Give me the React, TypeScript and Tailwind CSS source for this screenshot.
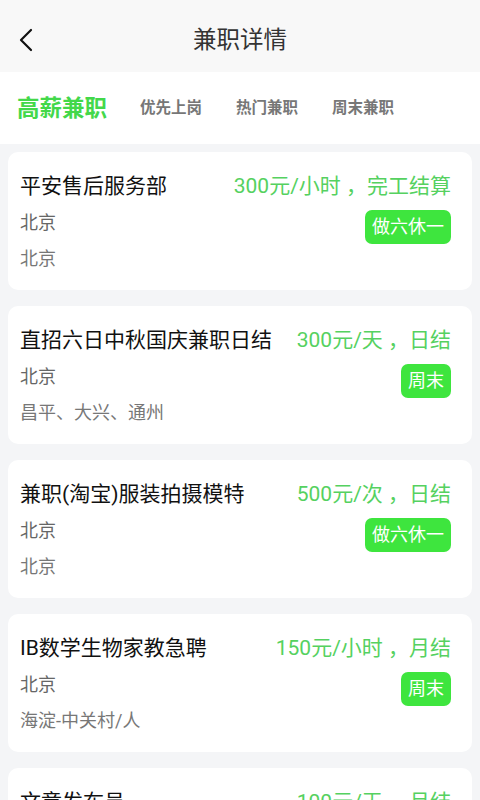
import React from 'react';

const jobs = [
  { title: '平安售后服务部', price: '300元/小时 ，完工结算', city: '北京', area: '北京', tag: '做六休一' },
  { title: '直招六日中秋国庆兼职日结', price: '300元/天 ，日结', city: '北京', area: '昌平、大兴、通州', tag: '周末' },
  { title: '兼职(淘宝)服装拍摄模特', price: '500元/次 ，日结', city: '北京', area: '北京', tag: '做六休一' },
  { title: 'IB数学生物家教急聘', price: '150元/小时 ，月结', city: '北京', area: '海淀-中关村/人', tag: '周末' },
  { title: '文章发布员', price: '100元/天 ，月结', city: '北京', area: '北京', tag: '周末' },
];

const tabs = ['优先上岗', '热门兼职', '周末兼职'];

function JobCard({ job }: { job: (typeof jobs)[number] }) {
  return (
    <div className="bg-white rounded-[10px] pl-3 pr-[21px] pt-[17px] pb-[14px]">
      <div className="h-[36px] flex justify-between items-center whitespace-nowrap">
        <span className="text-[21px] text-[#111]">{job.title}</span>
        <span className="text-[21px] text-[#55d160]">{job.price}</span>
      </div>
      <div className="h-[36px] flex justify-between items-start">
        <span className="text-[18px] leading-[36px] text-[#666]">{job.city}</span>
        <span className="mt-[5px] h-[34px] px-[7px] rounded-[7px] bg-[#3ee53e] text-white text-[18px] leading-[34px]">
          {job.tag}
        </span>
      </div>
      <div className="h-[35px] leading-[35px] text-[18px] text-[#777]">{job.area}</div>
    </div>
  );
}

export default function App() {
  return (
    <div
      className="w-[480px] h-[800px] overflow-hidden bg-[#f4f5f7]"
      style={{ fontFamily: 'Roboto, "Noto Sans CJK SC", sans-serif' }}
    >
      {/* 顶部导航 */}
      <div className="h-[72px] bg-[#f8f8f8] flex items-center pt-[9px] relative">
        <svg className="absolute left-[18px] top-[28px]" width="16" height="24" viewBox="0 0 16 24">
          <path d="M13 2 L3 12 L13 22" fill="none" stroke="#111" strokeWidth="2.2" strokeLinecap="round" strokeLinejoin="round" />
        </svg>
        <div className="w-full text-center text-[23.5px] text-[#333]">兼职详情</div>
      </div>

      {/* 分类 */}
      <div className="h-[72px] bg-white flex items-center pl-[17px] pt-[2px]">
        <span className="text-[22.5px] font-bold text-[#43d84a]">高薪兼职</span>
        <div className="flex gap-[34px] ml-[33px]">
          {tabs.map((t) => (
            <span key={t} className="text-[15.5px] font-bold text-[#777]">
              {t}
            </span>
          ))}
        </div>
      </div>

      {/* 列表 */}
      <div className="flex flex-col gap-4 px-2 pt-2">
        {jobs.map((j) => (
          <JobCard key={j.title} job={j} />
        ))}
      </div>
    </div>
  );
}
